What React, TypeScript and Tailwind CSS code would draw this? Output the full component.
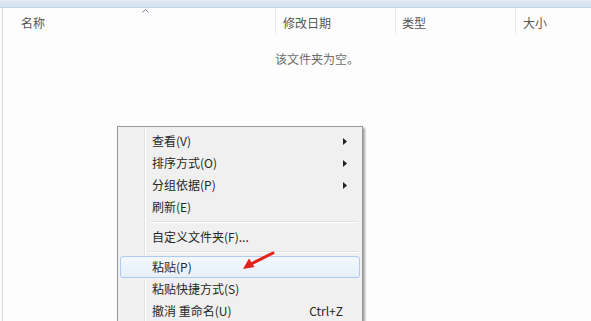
import React from 'react';

const font = { fontFamily: '"Noto Sans CJK SC", "Liberation Sans", sans-serif' };

type Item = { label: string; sub?: boolean; shortcut?: string; active?: boolean } | 'sep';

const items: Item[] = [
  { label: '查看(V)', sub: true },
  { label: '排序方式(O)', sub: true },
  { label: '分组依据(P)', sub: true },
  { label: '刷新(E)' },
  'sep',
  { label: '自定义文件夹(F)...' },
  'sep',
  { label: '粘贴(P)', active: true },
  { label: '粘贴快捷方式(S)' },
  { label: '撤消 重命名(U)', shortcut: 'Ctrl+Z' },
];

const App: React.FC = () => {
  return (
    <div className="relative w-[591px] h-[321px] overflow-hidden bg-[#fdfdfd] text-[12px]" style={font}>
      {/* top strip */}
      <div className="h-[8px] bg-gradient-to-b from-[#e3ebf6] to-[#d5e1f0] border-b border-[#c5d3e6]" />

      <div className="flex h-[313px]">
        <div className="w-[3px] border-r border-[#d9d9d9]" />
        <div className="flex-1 flex flex-col">
          {/* column header */}
          <div className="relative flex h-[26px] text-[#555]">
            <div className="w-[273px] pl-[18px] pt-[6px] border-r border-[#ececec]">名称</div>
            <div className="w-[120px] pl-[7px] pt-[6px] border-r border-[#ececec]">修改日期</div>
            <div className="w-[120px] pl-[6px] pt-[6px] border-r border-[#ececec]">类型</div>
            <div className="flex-1 pl-[7px] pt-[6px]">大小</div>
            <svg className="absolute left-[139px] top-[1px]" width="7" height="4" viewBox="0 0 7 4">
              <path d="M0.5 3.5 L3.5 0.5 L6.5 3.5" fill="none" stroke="#6e7f95" strokeWidth="1" />
            </svg>
          </div>
          <div className="pl-[272px] pt-[16px] text-[#6d6d6d]">该文件夹为空。</div>
        </div>
      </div>

      {/* context menu */}
      <div className="absolute left-[117px] top-[126px] w-[246px] pb-[20px] bg-[#f0f0f0] border border-[#979797] shadow-[2px_2px_2px_rgba(0,0,0,0.35)] text-[#262626]">
        <div className="relative py-[3px] px-[2px]">
          <div className="absolute left-[26px] top-0 bottom-[-20px] w-[2px] border-l border-[#e2e3e3] bg-white" />
          {items.map((it, i) =>
            it === 'sep' ? (
              <div key={i} className="ml-[30px] mr-[2px] my-[3px] h-[2px] border-t border-[#e0e0e0] bg-white" />
            ) : (
              <div
                key={i}
                className={
                  'relative flex items-center h-[22px] pl-[31px] pr-[12px] ' +
                  (it.active
                    ? 'rounded-[3px] border border-[#aeccf0] bg-gradient-to-b from-[#f4f8fd] to-[#e6effa]'
                    : 'border border-transparent')
                }
              >
                <span className="flex-1">{it.label}</span>
                {it.shortcut && <span className="mr-[4px]">{it.shortcut}</span>}
                {it.sub && (
                  <svg width="4" height="7" viewBox="0 0 4 7">
                    <path d="M0 0 L4 3.5 L0 7 Z" fill="#222" />
                  </svg>
                )}
              </div>
            )
          )}
        </div>
      </div>

      {/* red arrow */}
      <svg className="absolute left-[240px] top-[250px]" width="36" height="22" viewBox="0 0 36 22">
        <path d="M33 3 L11 14" stroke="#e3201b" strokeWidth="3" strokeLinecap="round" />
        <path d="M3 19 L9 8.5 L14.5 17 Z" fill="#e3201b" />
      </svg>
    </div>
  );
};

export default App;
